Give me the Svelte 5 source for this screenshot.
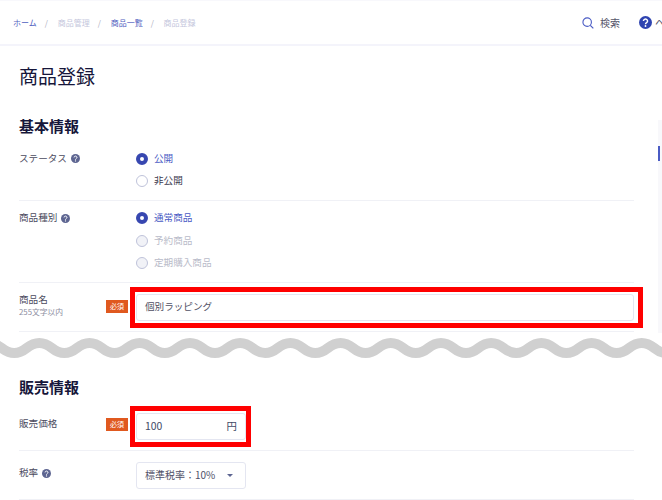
<script>
  let wave = 'M-36 353';
  for (let i = 0; i < 16; i++) wave += ' c12.5 0 12.5 -10 25.1 -10 s12.5 10 25.1 10';
  const statusOptions = [
    { label: '公開', state: 'on' },
    { label: '非公開', state: 'off' }
  ];
  const kindOptions = [
    { label: '通常商品', state: 'on' },
    { label: '予約商品', state: 'dis' },
    { label: '定期購入商品', state: 'dis' }
  ];
</script>

{#snippet help(cls)}
  <svg class={cls} viewBox="0 0 20 20" aria-hidden="true">
    <circle cx="10" cy="10" r="10" fill="currentColor" />
    <path d="M6.8 7.6a3.2 3 0 1 1 4.9 2.6c-1.1.7-1.7 1.1-1.7 2.4" fill="none" stroke="#fff" stroke-width="2.2" />
    <circle cx="10" cy="15.4" r="1.4" fill="#fff" />
  </svg>
{/snippet}

{#snippet radios(options)}
  <div class="radios">
    {#each options as o}
      <div class="radio {o.state}"><span class="dot"></span><span>{o.label}</span></div>
    {/each}
  </div>
{/snippet}

<div class="page">
  <header>
    <nav>
      <span class="link">ホーム</span><span class="sep">/</span>
      <span class="muted">商品管理</span><span class="sep">/</span>
      <span class="link">商品一覧</span><span class="sep">/</span>
      <span class="muted">商品登録</span>
    </nav>
    <div class="tools">
      <svg class="search" viewBox="0 0 13 13" aria-hidden="true">
        <circle cx="5.6" cy="5.6" r="4.6" fill="none" stroke="#4a5bc4" stroke-width="1.2" />
        <path d="M9 9l3.3 3.3" stroke="#4a5bc4" stroke-width="1.3" fill="none" />
      </svg>
      <span class="tool-text">検索</span>
      {@render help('help-main')}
      <span class="tool-text">ヘルプ</span>
    </div>
  </header>

  <main>
    <h1>商品登録</h1>

    <section class="first">
      <h2>基本情報</h2>
      <div class="row">
        <div class="label"><div class="name">ステータス {@render help('help')}</div></div>
        {@render radios(statusOptions)}
      </div>
      <div class="row">
        <div class="label"><div class="name">商品種別 {@render help('help')}</div></div>
        {@render radios(kindOptions)}
      </div>
      <div class="row field">
        <div class="label">
          <div class="name stack">商品名<small>255文字以内</small></div>
          <span class="badge">必須</span>
        </div>
        <div class="control wide">
          <div class="input">個別ラッピング</div>
          <span class="mark mark-wide"></span>
        </div>
      </div>
    </section>

    <section class="second">
      <h2>販売情報</h2>
      <div class="row field">
        <div class="label">
          <div class="name">販売価格</div>
          <span class="badge">必須</span>
        </div>
        <div class="control narrow">
          <div class="input price"><span>100</span><span>円</span></div>
          <span class="mark mark-narrow"></span>
        </div>
      </div>
      <div class="row field">
        <div class="label"><div class="name">税率 {@render help('help')}</div></div>
        <div class="control narrow">
          <div class="input price select"><span>標準税率：10%</span><span class="caret"></span></div>
        </div>
      </div>
    </section>
  </main>

  <div class="scrollbar"><span></span></div>
  <svg class="wave" viewBox="0 0 662 500" aria-hidden="true">
    <path d={wave} fill="none" stroke="#d0d0d0" stroke-width="10" />
  </svg>
</div>

<style>
  :global(body) {
    margin: 0;
    background: #fff;
  }
  .page {
    position: relative;
    width: 662px;
    height: 500px;
    overflow: hidden;
    background: #fff;
    color: #4b4b5e;
    font-family: "Noto Sans CJK JP", "Noto Sans", sans-serif;
    font-size: 9.6px;
    line-height: 1;
  }
  header {
    display: flex;
    align-items: center;
    box-sizing: border-box;
    height: 46px;
    border-top: 1px solid #f8f8fc;
    border-bottom: 2px solid #f4f4fb;
    white-space: nowrap;
  }
  nav {
    flex: 0 0 582px;
    box-sizing: border-box;
    padding-left: 13px;
    font-size: 8px;
  }
  .link { color: #5060c0; }
  .muted { color: #c4c6dc; }
  .sep {
    margin: 0 8px;
    color: #a9abbd;
  }
  .tools {
    display: flex;
    flex: none;
    align-items: center;
    color: #55556a;
    font-size: 10px;
  }
  .search {
    width: 12px;
    height: 12px;
    margin-right: 6px;
  }
  .help-main {
    width: 13px;
    height: 13px;
    margin: 0 3px 0 19px;
    color: #2f44b0;
  }
  main {
    width: 615px;
    margin-left: 19px;
  }
  h1 {
    margin: 0;
    padding-top: 19px;
    color: #16163a;
    font-size: 19px;
    font-weight: 400;
    line-height: 22px;
  }
  h2 {
    margin: 0;
    color: #16163a;
    font-size: 15px;
    font-weight: 700;
    line-height: 18px;
  }
  .first { margin-top: 30px; }
  .first h2 { margin-bottom: 6px; }
  .second { margin-top: 46px; }
  .second h2 { margin-bottom: 6px; }
  .row {
    display: flex;
    padding: 11px 0 12px;
    border-bottom: 1px solid #f0f1f6;
  }
  .row.field {
    padding: 11px 0 10px;
  }
  .label {
    display: flex;
    flex: 0 0 109px;
    justify-content: space-between;
    margin-right: 8px;
  }
  .name {
    display: flex;
    align-items: center;
    gap: 3px;
    height: 13px;
    color: #4b4b5e;
  }
  .field .name {
    height: 23px;
    box-sizing: border-box;
  }
  .field .name.stack {
    flex-direction: column;
    align-items: flex-start;
    gap: 4px;
    height: auto;
    padding-top: 1px;
  }
  small {
    color: #8b8c9e;
    font-size: 7.8px;
  }
  .help {
    width: 9px;
    height: 9px;
    margin-left: 1px;
    color: #5d6591;
  }
  .badge {
    align-self: flex-start;
    margin-top: 5px;
    padding: 3px 4px;
    background: #e0591f;
    color: #fff;
    font-size: 7px;
    line-height: 7px;
  }
  .stack + .badge { margin-top: 6px; }
  .radios {
    display: flex;
    flex-direction: column;
    gap: 9.5px;
  }
  .radio {
    display: flex;
    align-items: center;
    gap: 6px;
    height: 13px;
    color: #3b3b50;
  }
  .radio.on { color: #4a5bc4; }
  .radio.dis { color: #b9bbc9; }
  .dot {
    box-sizing: border-box;
    width: 12px;
    height: 12px;
    border: 1px solid #bfc3da;
    border-radius: 50%;
    background: #fff;
  }
  .on .dot {
    border: 4px solid #3747b0;
  }
  .dis .dot { background: #f1f2f7; }
  .control {
    position: relative;
    box-sizing: border-box;
  }
  .wide { width: 498px; }
  .narrow { width: 110px; }
  .input {
    display: flex;
    align-items: center;
    box-sizing: border-box;
    height: 27px;
    padding: 0 8px;
    border: 1px solid #e4e6f1;
    border-radius: 3px;
    background: #fff;
    color: #4f4f63;
  }
  .price {
    justify-content: space-between;
    color: #3f4a66;
    font-size: 10.4px;
  }
  .select {
    color: #4f5068;
    font-size: 10px;
    padding-right: 12px;
  }
  .caret {
    width: 0;
    height: 0;
    border: 3px solid transparent;
    border-top: 3px solid #5d6591;
    border-bottom-width: 0;
  }
  .mark {
    position: absolute;
    top: -7px;
    bottom: -7px;
    left: -6px;
    border: 5px solid #f00;
  }
  .mark-wide { right: -9px; }
  .mark-narrow { right: -5px; }
  .scrollbar {
    position: absolute;
    top: 120px;
    left: 658px;
    width: 4px;
    height: 213px;
    background: #f8f8fb;
  }
  .scrollbar span {
    display: block;
    width: 2px;
    height: 15px;
    margin-top: 26px;
    background: #4a5bc4;
  }
  .wave {
    position: absolute;
    top: 0;
    left: 0;
    width: 662px;
    height: 500px;
    pointer-events: none;
  }
</style>
